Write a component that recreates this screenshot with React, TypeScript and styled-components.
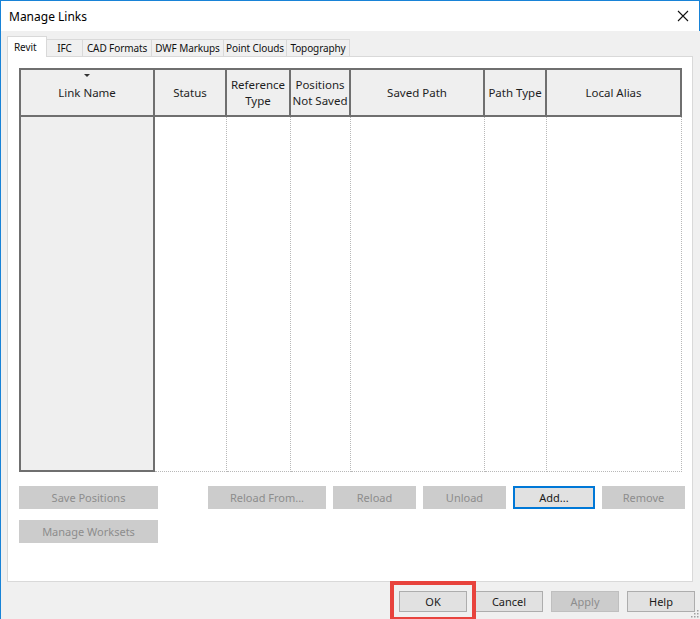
import React from 'react'
import styled, { createGlobalStyle, css } from 'styled-components'

const GlobalStyle = createGlobalStyle`
    html, body {
        margin: 0;
        padding: 0;
        background: #ffffff;
    }
    body {
        font-family: "Noto Sans", "Open Sans", sans-serif;
        font-size: 12px;
        color: #1a1a1a;
    }
`

const tabs = [
    { label: 'Revit', width: 40 },
    { label: 'IFC', width: 37 },
    { label: 'CAD Formats', width: 70 },
    { label: 'DWF Markups', width: 73 },
    { label: 'Point Clouds', width: 64 },
    { label: 'Topography', width: 64 },
]

// header label, column width
const columns: [string[], number][] = [
    [['Link Name'], 134],
    [['Status'], 72],
    [['Reference', 'Type'], 64],
    [['Positions', 'Not Saved'], 60],
    [['Saved Path'], 134],
    [['Path Type'], 62],
    [['Local Alias'], 135],
]

const App = () => {
    return (
        <>
            <GlobalStyle />
            <Window>
                <TitleBar>
                    <Title>Manage Links</Title>
                    <CloseIcon width="12" height="12" viewBox="0 0 12 12">
                        <path d="M1 1 L11 11 M11 1 L1 11" stroke="#111" strokeWidth="1.1" fill="none" />
                    </CloseIcon>
                </TitleBar>

                <Body>
                    <TabRow>
                        {tabs.map((t, i) => (
                            <Tab key={t.label} $active={i === 0} $width={t.width}>
                                {t.label}
                            </Tab>
                        ))}
                    </TabRow>

                    <Panel>
                        <LinkTable $cols={columns.map((c) => c[1] + 'px').join(' ')}>
                            {columns.map(([lines], i) => (
                                <HeaderCell key={'h' + i}>
                                    {i === 0 && <SortArrow />}
                                    {lines.map((l) => (
                                        <div key={l}>{l}</div>
                                    ))}
                                </HeaderCell>
                            ))}
                            {columns.map((_, i) => (
                                <BodyCell key={'b' + i} $first={i === 0} />
                            ))}
                        </LinkTable>

                        <ButtonArea>
                            <ButtonRow>
                                <PanelButton $width={139} disabled>Save Positions</PanelButton>
                                <ButtonGroup>
                                    <PanelButton $width={118} disabled>Reload From...</PanelButton>
                                    <PanelButton $width={83} disabled>Reload</PanelButton>
                                    <PanelButton $width={83} disabled>Unload</PanelButton>
                                    <PanelButton $width={82} $focused>Add...</PanelButton>
                                    <PanelButton $width={83} disabled>Remove</PanelButton>
                                </ButtonGroup>
                            </ButtonRow>
                            <ButtonRow>
                                <PanelButton $width={139} disabled>Manage Worksets</PanelButton>
                            </ButtonRow>
                        </ButtonArea>
                    </Panel>

                    <Footer>
                        <Highlighted>
                            <DialogButton>OK</DialogButton>
                            <RedMark />
                        </Highlighted>
                        <DialogButton>Cancel</DialogButton>
                        <DialogButton disabled>Apply</DialogButton>
                        <DialogButton>Help</DialogButton>
                    </Footer>
                </Body>

                <Grip width="10" height="10" viewBox="0 0 10 10">
                    {[[8, 2], [8, 5], [5, 5], [8, 8], [5, 8], [2, 8]].map(([x, y]) => (
                        <rect key={x + '-' + y} x={x} y={y} width="1.5" height="1.5" fill="#a0a0a0" />
                    ))}
                </Grip>
            </Window>
        </>
    )
}

export default App

const Window = styled.div`
    position: relative;
    box-sizing: border-box;
    width: 700px;
    height: 619px;
    display: flex;
    flex-direction: column;
    background: #f0f0f0;
    border-left: 1px solid #1883d7;
    border-top: 1px solid #1883d7;
    overflow: hidden;
`

const TitleBar = styled.div`
    height: 30px;
    flex: none;
    display: flex;
    align-items: center;
    justify-content: space-between;
    background: #ffffff;
    padding: 0 10px 0 8px;
    border-right: 1px solid #1883d7;
`

const Title = styled.span`
    font-size: 12px;
    color: #000000;
`

const CloseIcon = styled.svg`
    display: block;
`

const Body = styled.div`
    flex: 1;
    display: flex;
    flex-direction: column;
    padding: 5px 0 0 6px;
`

const TabRow = styled.div`
    display: flex;
    align-items: flex-end;
    height: 20px;
    position: relative;
    z-index: 1;
`

const Tab = styled.div<{ $active?: boolean; $width: number }>`
    box-sizing: border-box;
    width: ${(p) => p.$width}px;
    height: 17px;
    margin-left: -1px;
    display: flex;
    align-items: center;
    justify-content: center;
    white-space: nowrap;
    overflow: hidden;
    font-size: 10px;
    letter-spacing: -0.1px;
    color: #111;
    background: #f0f0f0;
    border: 1px solid #d9d9d9;
    border-bottom: none;
    &:first-child {
        margin-left: 0;
    }
    ${(p) =>
        p.$active &&
        css`
            height: 21px;
            margin-bottom: -1px;
            background: #ffffff;
            align-items: flex-start;
            justify-content: flex-start;
            padding: 3px 0 0 6px;
            position: relative;
            z-index: 2;
        `}
`

const Panel = styled.div`
    box-sizing: border-box;
    width: 686px;
    height: 526px;
    background: #ffffff;
    border: 1px solid #d9d9d9;
    padding: 11px 0 0 11px;
`

const LinkTable = styled.div<{ $cols: string }>`
    box-sizing: border-box;
    width: 663px;
    height: 404px;
    display: grid;
    grid-template-columns: ${(p) => p.$cols};
    grid-template-rows: 47px 1fr;
    border-top: 2px solid #6f6f6f;
    border-left: 2px solid #6f6f6f;
`

const HeaderCell = styled.div`
    position: relative;
    box-sizing: border-box;
    display: flex;
    flex-direction: column;
    align-items: center;
    justify-content: center;
    text-align: center;
    line-height: 16px;
    font-size: 11.5px;
    color: #1e1e1e;
    background: #efefef;
    border-right: 2px solid #6f6f6f;
    border-bottom: 2px solid #6f6f6f;
`

const SortArrow = styled.span`
    position: absolute;
    top: 4px;
    left: 50%;
    margin-left: -3px;
    width: 0;
    height: 0;
    border-left: 3px solid transparent;
    border-right: 3px solid transparent;
    border-top: 3px solid #333;
`

const BodyCell = styled.div<{ $first?: boolean }>`
    box-sizing: border-box;
    background: #ffffff;
    border-right: 1px dotted #b8b8b8;
    border-bottom: 1px dotted #b8b8b8;
    ${(p) =>
        p.$first &&
        css`
            background: #efefef;
            border-right: 2px solid #6f6f6f;
            border-bottom: 2px solid #6f6f6f;
        `}
`

const ButtonArea = styled.div`
    display: flex;
    flex-direction: column;
    gap: 11px;
    margin-top: 14px;
`

const ButtonRow = styled.div`
    display: flex;
    align-items: center;
`

const ButtonGroup = styled.div`
    display: flex;
    gap: 7px;
    margin-left: 50px;
`

const buttonBase = css`
    box-sizing: border-box;
    height: 23px;
    padding: 0;
    font-family: "Noto Sans", "Open Sans", sans-serif;
    font-size: 11px;
    color: #1a1a1a;
    background: #e1e1e1;
    border: 1px solid #adadad;
    &:disabled {
        color: #8d8d8d;
        background: #cccccc;
        border-color: #cccccc;
    }
`

const PanelButton = styled.button<{ $width: number; $focused?: boolean }>`
    ${buttonBase}
    width: ${(p) => p.$width}px;
    ${(p) =>
        p.$focused &&
        css`
            border: 2px solid #0078d7;
        `}
`

const Footer = styled.div`
    display: flex;
    justify-content: flex-end;
    gap: 8px;
    padding: 9px 5px 0 0;
`

const Highlighted = styled.div`
    position: relative;
`

const DialogButton = styled.button`
    ${buttonBase}
    width: 68px;
    height: 21px;
    &:disabled {
        border-color: #bfbfbf;
    }
`

const RedMark = styled.span`
    position: absolute;
    left: -9px;
    top: -10px;
    width: 86px;
    height: 40px;
    box-sizing: border-box;
    border: 4px solid #e8433d;
    pointer-events: none;
`

const Grip = styled.svg`
    position: absolute;
    right: 1px;
    bottom: 1px;
`
